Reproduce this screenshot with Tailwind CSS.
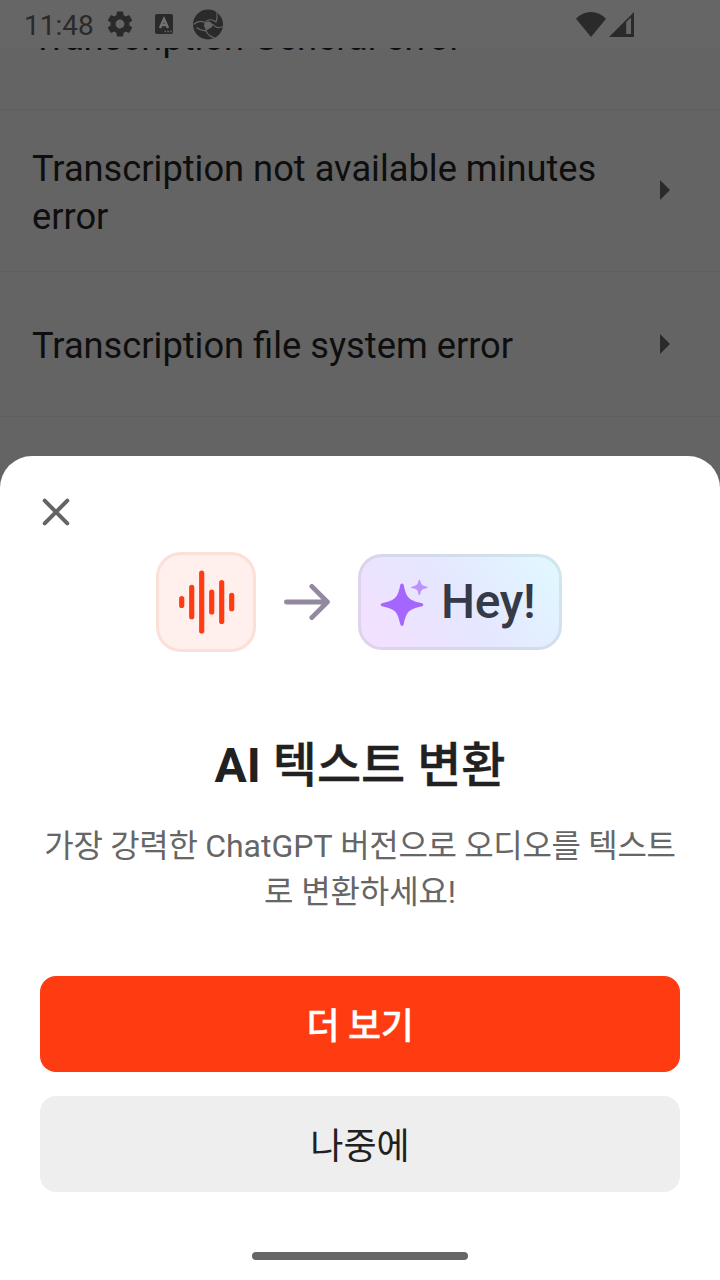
<!DOCTYPE html>
<html lang="ko">
<head>
<meta charset="utf-8">
<meta name="viewport" content="width=device-width">
<title>AI 텍스트 변환</title>
<script src="https://cdn.jsdelivr.net/npm/@tailwindcss/browser@4"></script>
</head>
<body class="w-[720px] h-[1280px] overflow-hidden bg-[#646464] font-['Roboto','Noto_Sans_CJK_KR',sans-serif]">
<div class="relative w-full h-full flex flex-col">
  <header class="h-12 shrink-0 bg-[#666666] flex items-center text-[#2a2a2a]">
    <span class="ml-6 w-[83px] pt-[4px] text-[28px] leading-[44px] whitespace-nowrap">11:48</span>
    <svg class="w-[26px] h-[26px] shrink-0" viewBox="2 2 20 20" fill="currentColor"><path d="M19.14 12.94c.04-.3.06-.61.06-.94 0-.32-.02-.64-.07-.94l2.03-1.58a.49.49 0 0 0 .12-.61l-1.92-3.32a.488.488 0 0 0-.59-.22l-2.39.96c-.5-.38-1.03-.7-1.62-.94l-.36-2.54a.484.484 0 0 0-.48-.41h-3.84c-.24 0-.43.17-.47.41l-.36 2.54c-.59.24-1.13.57-1.62.94l-2.39-.96c-.22-.08-.47 0-.59.22L2.74 8.87c-.12.21-.08.47.12.61l2.03 1.58c-.05.3-.09.63-.09.94s.02.64.07.94l-2.03 1.58a.49.49 0 0 0-.12.61l1.92 3.32c.12.22.37.29.59.22l2.39-.96c.5.38 1.03.7 1.62.94l.36 2.54c.05.24.24.41.48.41h3.84c.24 0 .44-.17.47-.41l.36-2.54c.59-.24 1.13-.56 1.62-.94l2.39.96c.22.08.47 0 .59-.22l1.92-3.32a.49.49 0 0 0-.12-.61zM12 15.400a3.400 3.400 0 1 1 0-6.800 3.400 3.400 0 0 1 0 6.800z"/></svg>
    <div class="ml-[22px] w-[18px] h-5 shrink-0 rounded-[2px] bg-[#2a2a2a] flex flex-col items-center">
      <svg class="w-[18px] h-5" viewBox="0 0 18 20"><path d="M5 14 9 5l4 9M6.400 11h5.200" fill="none" stroke="#727272" stroke-width="2.500"/><path d="M9.500 17.500h1.600m1.200 0h1.600m1.200 0h1.600" stroke="#666" stroke-width="1.600"/></svg>
    </div>
    <svg class="ml-5 w-[30px] h-[31px] shrink-0" viewBox="0 0 30 31"><circle cx="15" cy="15.500" r="15" fill="#2a2a2a"/><path d="M11.500 13.500 16 12.300 20.500 15.500 18.500 18.500 13 21.500 11 17Z" fill="#666"/><path d="M11.500 13.500C14 10.500 19 9.500 23 13 24.300 10 24.500 7 23.800 3.500M11.500 13.500C8 11.500 4.500 12 .5 15.500M20.500 15.500C22 18.500 26 19.500 29.500 17.500M13 21.500C10 22 6.500 21 3.500 18.500M13 21.500C14 25 17 27.500 21.500 29" fill="none" stroke="#666" stroke-width="1.100"/></svg>
    <svg class="ml-[353px] w-[30px] h-[25px] shrink-0" viewBox="0 0 30 25" fill="currentColor"><path d="M15 25 0 6.800Q6.400 0 15 0t15 6.800Z"/></svg>
    <svg class="ml-[3px] w-[25px] h-[25px] shrink-0" viewBox="0 0 25 25"><path d="M25 0v25H0Z" fill="currentColor"/><path d="M17.200 10 22 5.600V22h-4.800Z" fill="#666"/></svg>
  </header>
  <main class="flex flex-col text-[36.25px] leading-[48px] text-[#0e0e0e]">
    <div class="h-[62px] overflow-hidden border-b border-[#5e5e5e] px-8"><div class="-mt-[34px] whitespace-nowrap">Transcription General error</div></div>
    <div class="h-[162px] border-b border-[#5e5e5e] pl-8 pr-[50px] flex items-center justify-between">
      <p class="w-[600px] pt-[4px]">Transcription not available minutes error</p>
      <svg class="mb-[2px] w-[10px] h-5" viewBox="0 0 10 20"><path d="m0 0 10 10L0 20Z" fill="#2a2a2a"/></svg>
    </div>
    <div class="h-[145px] border-b border-[#5e5e5e] pl-8 pr-[50px] flex items-center justify-between">
      <p class="pt-[4px]">Transcription file system error</p>
      <svg class="w-[10px] h-5" viewBox="0 0 10 20"><path d="m0 0 10 10L0 20Z" fill="#2a2a2a"/></svg>
    </div>
  </main>
  <section class="absolute inset-x-0 bottom-0 h-[824px] rounded-t-[32px] bg-white flex flex-col items-center px-10">
    <button class="self-start mt-[42px] ml-[2px] w-7 h-7" aria-label="닫기"><svg class="w-7 h-7" viewBox="0 0 28 28" fill="none" stroke="#646464" stroke-width="4" stroke-linecap="round"><path d="m2.700 2.700 22.600 22.600m0-22.600L2.700 25.300"/></svg></button>
    <div class="mt-[26px] h-[100px] w-full pl-[116px] flex items-center">
      <div class="w-[100px] h-[100px] rounded-[25px] border-3 border-[#fcdfd7] bg-[#fff0ee] flex items-center justify-center">
        <svg class="w-[94px] h-[94px] shrink-0" viewBox="159 555 94 94" stroke="#ff3b12" stroke-width="5.200" stroke-linecap="round"><path d="M181.700 598.600v6.800M191.700 587.300v29.400M201.700 573v58M211.700 592v20M221.700 582.700v38.700M231.700 595.300v13.400"/></svg>
      </div>
      <svg class="ml-7 w-[46px] h-9" viewBox="0 0 46 36" fill="none" stroke="#93889f" stroke-width="4.800" stroke-linecap="round" stroke-linejoin="round"><path d="M2.400 18h41M27.800 2.400 43.400 18 27.800 33.600"/></svg>
      <div class="ml-[28px] w-[204px] h-24 rounded-[24px] border-3 border-[#90a0a0]/20 bg-[linear-gradient(50deg,#f5dfff_0%,#e5e7ff_50%,#e0faff_100%)] bg-origin-border flex items-center">
        <svg class="mt-[2px] ml-[19px] w-[49px] h-[48px] shrink-0" viewBox="380 579 49 48"><path d="M402 583.500c1.200 0 1.500.8 1.900 2.300 2.400 12 5.200 14.500 17.200 17.200 3 .7 3 2.700 0 3.400-12 2.700-14.800 5.200-17.200 17.200-.4 1.500-.7 2.400-1.900 2.400s-1.500-.9-1.900-2.400c-2.400-12-5.200-14.500-17.200-17.200-3-.7-3-2.700 0-3.400 12-2.700 14.800-5.200 17.200-17.200.4-1.500.7-2.300 1.900-2.300Z" fill="#a566ff"/><path d="M419.400 579.800c.6 0 .7.6.9 1.300.9 3.700 1.800 4.600 6.600 5.600 1.300.3 1.300 1.100 0 1.400-4.800 1-5.700 1.900-6.600 5.700-.2.700-.3 1.300-.9 1.300s-.7-.6-.9-1.300c-.9-3.800-1.800-4.700-6.600-5.700-1.300-.3-1.300-1.100 0-1.400 4.800-1 5.700-1.900 6.600-5.600.2-.7.3-1.300.9-1.300Z" fill="#bf91ff"/></svg>
        <span class="ml-3 text-[48px] leading-[56px] font-medium tracking-[-0.300px] text-[#353948]">Hey!</span>
      </div>
    </div>
    <h1 class="mt-[78px] text-[48px] leading-[72px] font-bold text-[#212121] whitespace-nowrap">AI <span class="font-medium [-webkit-text-stroke:0.4px_#212121]">텍스트 변환</span></h1>
    <p class="mt-[21px] text-[32px] leading-[46px] tracking-[-0.32px] text-[#666] text-center whitespace-nowrap">가장 강력한 <span class="tracking-normal">ChatGPT</span> 버전으로 오디오를 텍스트<br><span class="tracking-[-0.1px]">로 변환하세요!</span></p>
    <button class="absolute top-[520px] w-[640px] h-24 pt-[6px] rounded-2xl bg-[#ff3b12] text-white text-[36px] font-medium tracking-[-0.3px] [-webkit-text-stroke:0.3px_#fff]">더 보기</button>
    <button class="absolute top-[640px] w-[640px] h-24 pt-[6px] rounded-2xl bg-[#eeeeee] text-[#212121] text-[36px]">나중에</button>
    <div class="absolute bottom-5 w-[216px] h-2 rounded-full bg-[#666]"></div>
  </section>
</div>
</body>
</html>
